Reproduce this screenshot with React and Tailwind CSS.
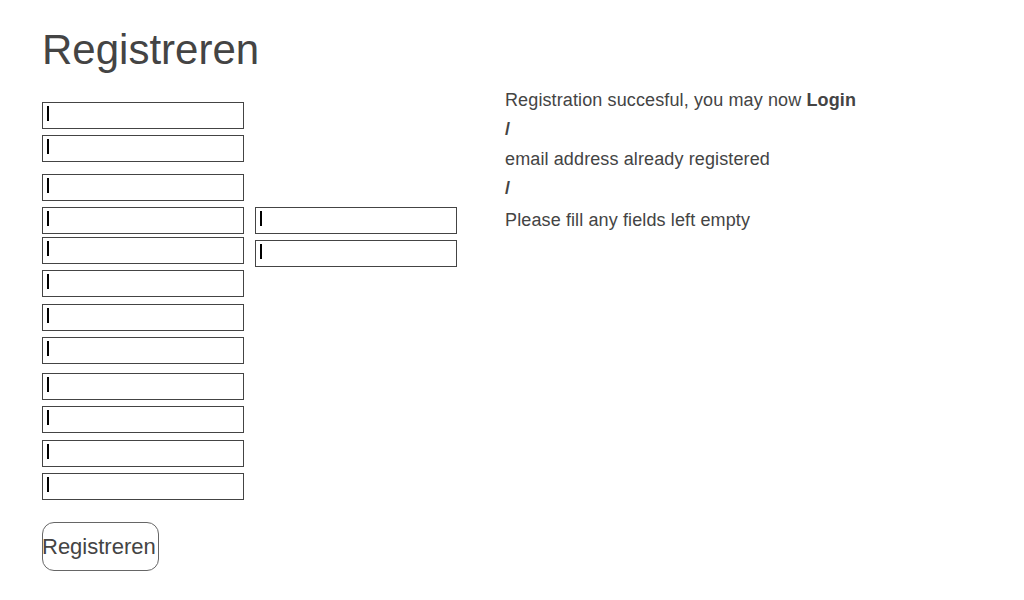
import React from 'react';

// a single input box with the black caret mark
const Field = ({ className = '' }) => (
  <div className={`relative h-[27px] w-[202px] border border-[#444] bg-white ${className}`}>
    <div className="absolute left-[4px] top-[3px] h-[15px] w-[2px] bg-black"></div>
  </div>
);

const App = () => {
  return (
    <div
      className="min-h-[600px] bg-white pl-[42px] pt-[26px] text-[#444]"
      style={{ fontFamily: '"Liberation Sans", Arial, sans-serif' }}
    >
      <h1 className="text-[42px] leading-[48px] font-normal">Registreren</h1>

      <div className="mt-[11px] flex items-start">
        {/* form column */}
        <div className="mt-[17px] flex w-[463px] flex-col">
          <Field />
          <Field className="mt-[6px]" />
          <Field className="mt-[12px]" />
          <div className="mt-[6px] flex gap-[11px]">
            <Field />
            <Field />
          </div>
          <div className="mt-[3px] flex items-start gap-[11px]">
            <Field />
            <Field className="mt-[3px]" />
          </div>
          <Field className="mt-[3px]" />
          <Field className="mt-[7px]" />
          <Field className="mt-[6px]" />
          <Field className="mt-[9px]" />
          <Field className="mt-[6px]" />
          <Field className="mt-[7px]" />
          <Field className="mt-[6px]" />

          <button className="mt-[22px] h-[49px] w-[117px] rounded-[12px] border border-[#666] bg-white pl-0 pr-0 text-left indent-[-1px] text-[22px] text-[#444]">
            Registreren
          </button>
        </div>

        {/* messages */}
        <div className="mt-[1px] flex flex-col text-[18px] leading-[29px] tracking-[0.12px]">
          <div>
            Registration succesful, you may now <span className="font-bold">Login</span>
          </div>
          <div className="font-bold">/</div>
          <div className="mt-[1px]">email address already registered</div>
          <div className="font-bold">/</div>
          <div className="mt-[3px]">Please fill any fields left empty</div>
        </div>
      </div>
    </div>
  );
};

export default App;
